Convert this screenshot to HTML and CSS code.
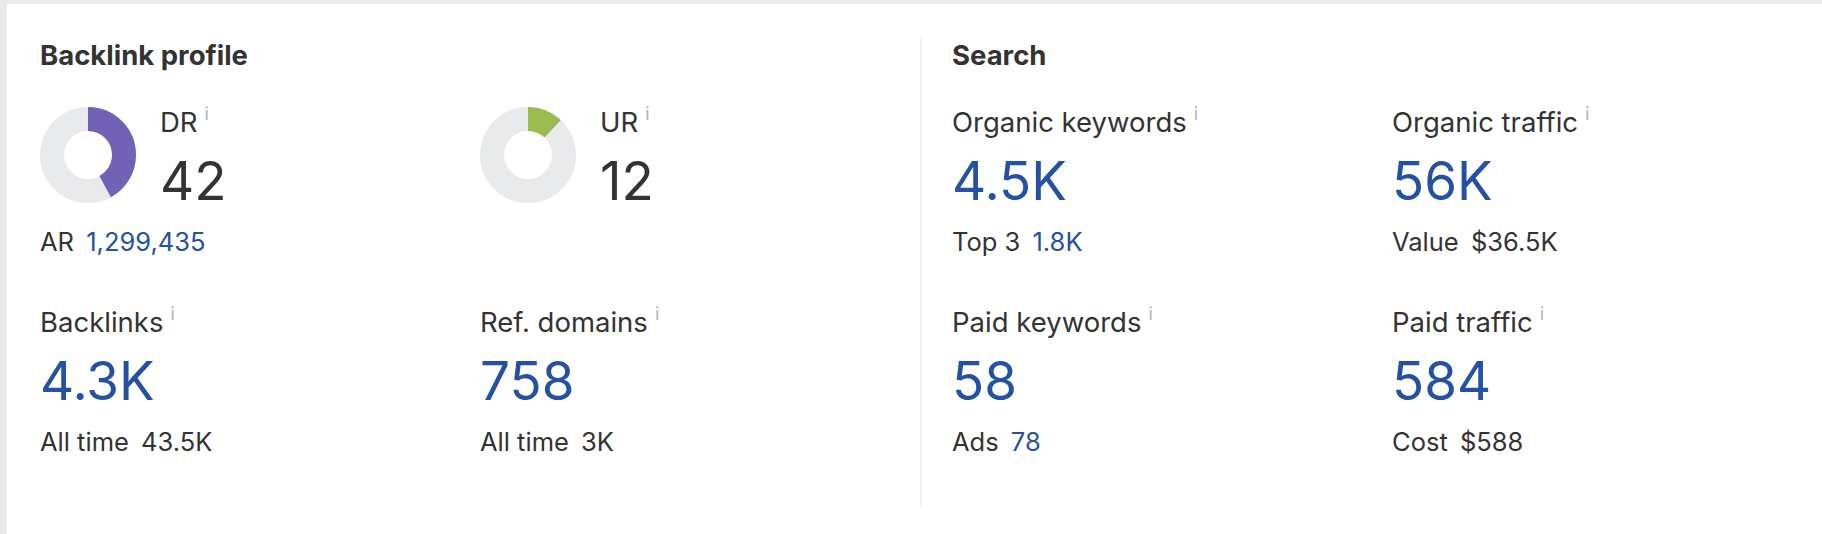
FILE: index.html
```html
<!DOCTYPE html>
<html lang="en">
<head>
<meta charset="utf-8">
<title>Overview</title>
<link rel="stylesheet" href="styles.css">
</head>
<body>
<div class="panel">
  <section class="group group-backlinks">
    <h2 class="group-title">Backlink profile</h2>
    <div class="metrics">
      <div class="metric">
        <div class="rating">
          <svg class="donut" viewBox="0 0 96 96" width="96" height="96">
            <circle class="donut-track" cx="48" cy="48" r="36"></circle>
            <circle class="donut-fill donut-dr" cx="48" cy="48" r="36" stroke-dasharray="95 227" transform="rotate(-90 48 48)"></circle>
          </svg>
          <div class="rating-text">
            <div class="metric-label">DR<span class="info">i</span></div>
            <div class="metric-value plain">42</div>
          </div>
        </div>
        <div class="metric-sub">AR <span class="sub-value link">1,299,435</span></div>
      </div>
      <div class="metric">
        <div class="rating">
          <svg class="donut" viewBox="0 0 96 96" width="96" height="96">
            <circle class="donut-track" cx="48" cy="48" r="36"></circle>
            <circle class="donut-fill donut-ur" cx="48" cy="48" r="36" stroke-dasharray="27.1 227" transform="rotate(-90 48 48)"></circle>
          </svg>
          <div class="rating-text">
            <div class="metric-label">UR<span class="info">i</span></div>
            <div class="metric-value plain">12</div>
          </div>
        </div>
      </div>
      <div class="metric">
        <div class="metric-label">Backlinks<span class="info">i</span></div>
        <div class="metric-value">4.3K</div>
        <div class="metric-sub">All time <span class="sub-value">43.5K</span></div>
      </div>
      <div class="metric">
        <div class="metric-label">Ref. domains<span class="info">i</span></div>
        <div class="metric-value">758</div>
        <div class="metric-sub">All time <span class="sub-value">3K</span></div>
      </div>
    </div>
  </section>
  <div class="divider"></div>
  <section class="group group-search">
    <h2 class="group-title">Search</h2>
    <div class="metrics">
      <div class="metric">
        <div class="metric-label">Organic keywords<span class="info">i</span></div>
        <div class="metric-value">4.5K</div>
        <div class="metric-sub">Top 3 <span class="sub-value link">1.8K</span></div>
      </div>
      <div class="metric">
        <div class="metric-label">Organic traffic<span class="info">i</span></div>
        <div class="metric-value">56K</div>
        <div class="metric-sub">Value <span class="sub-value">$36.5K</span></div>
      </div>
      <div class="metric">
        <div class="metric-label">Paid keywords<span class="info">i</span></div>
        <div class="metric-value">58</div>
        <div class="metric-sub">Ads <span class="sub-value link">78</span></div>
      </div>
      <div class="metric">
        <div class="metric-label">Paid traffic<span class="info">i</span></div>
        <div class="metric-value">584</div>
        <div class="metric-sub">Cost <span class="sub-value">$588</span></div>
      </div>
    </div>
  </section>
</div>
</body>
</html>
```

FILE: styles.css
```css
html, body {
  margin: 0;
  padding: 0;
}

body {
  background: #e9eaec;
  font-family: "Inter", "Liberation Sans", sans-serif;
  color: #333;
  width: 1822px;
  height: 534px;
  overflow: hidden;
}

.panel {
  margin: 4px 0 0 7px;
  height: 530px;
  background: #fff;
  display: flex;
  align-items: flex-start;
  padding-left: 33px;
}

.group {
  flex: none;
  padding-top: 35px;
}

.group-backlinks {
  width: 880px;
}

.group-search {
  padding-left: 31px;
}

.divider {
  flex: none;
  width: 1px;
  margin-top: 32px;
  height: 470px;
  background: #ebebeb;
}

.group-title {
  margin: 0;
  font-size: 27.5px;
  line-height: 32px;
  font-weight: 700;
  color: #333;
}

.metrics {
  display: grid;
  grid-template-columns: 440px 440px;
  row-gap: 48px;
  margin-top: 35px;
}

.metric {
  display: flex;
  flex-direction: column;
}

.rating {
  display: flex;
  align-items: flex-start;
  gap: 24px;
}

.donut {
  flex: none;
  margin-top: 1px;
}

.donut circle {
  fill: none;
  stroke-width: 24;
}

.donut-track {
  stroke: #e9eaec;
}

.donut-dr {
  stroke: #7162b8;
}

.donut-ur {
  stroke: #9bbb50;
}

.rating-text {
  display: flex;
  flex-direction: column;
}

.metric-label {
  font-size: 27.5px;
  line-height: 32px;
  color: #333;
  white-space: nowrap;
}

.info {
  font-size: 18px;
  line-height: 0;
  vertical-align: 12px;
  margin-left: 7px;
  color: #b4b4b4;
}

.metric-value {
  margin-top: 13px;
  font-size: 53px;
  line-height: 60px;
  color: #2351a5;
}

.metric-value.plain {
  color: #333;
}

.metric-sub {
  margin-top: 15px;
  font-size: 25.5px;
  line-height: 32px;
  color: #333;
  white-space: nowrap;
}

.sub-value {
  margin-left: 5px;
}

.sub-value.link {
  color: #2351a5;
}
```
